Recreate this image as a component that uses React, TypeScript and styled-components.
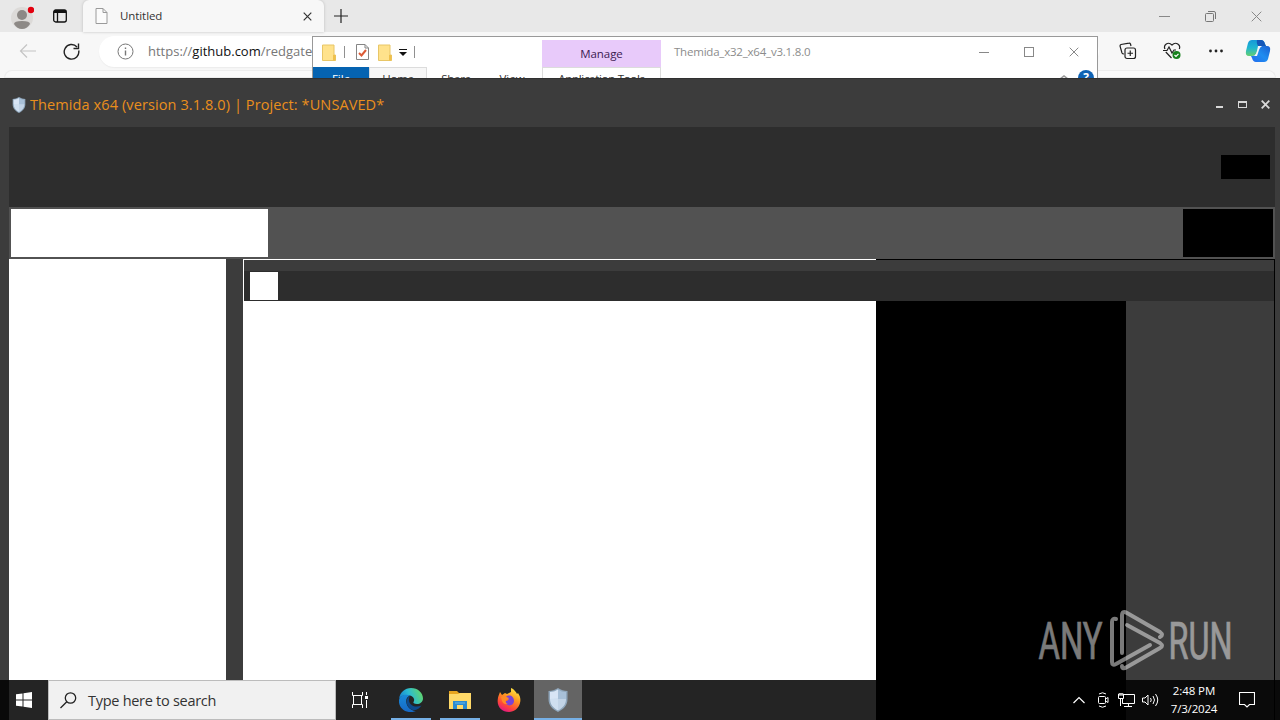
import React from "react";
import styled, { createGlobalStyle } from "styled-components";

const Global = createGlobalStyle`
  * { box-sizing: border-box; }
  body { margin: 0; overflow: hidden; background: #3b3b3b; font-family: "Open Sans", "Noto Sans", sans-serif; }
  svg { display: block; flex: none; }
`;

const Desktop = styled.div`
  position: relative;
  width: 1280px;
  height: 720px;
  overflow: hidden;
  display: flex;
  flex-direction: column;
`;

const Label = styled.span<{ $size: number; $color: string; $spacing?: number; $weight?: number }>`
  font-size: ${(p) => p.$size}px;
  line-height: 20px;
  color: ${(p) => p.$color};
  letter-spacing: ${(p) => p.$spacing ?? 0}px;
  font-weight: ${(p) => p.$weight ?? 400};
  white-space: pre;
`;

const Browser = styled.div`
  position: relative;
  height: 78px;
  flex: none;
  overflow: hidden;
  background: #f7f7f7;
`;

const TabStrip = styled.div`
  height: 32px;
  display: flex;
  align-items: center;
  background: #e8e8e8;
  padding-left: 10px;
`;

const BrowserTab = styled.div`
  width: 241px;
  height: 32px;
  margin-left: 14px;
  padding: 0 12px 0 12px;
  display: flex;
  align-items: center;
  background: #f7f7f7;
  border-radius: 6px 6px 0 0;
  box-shadow: 0 0 3px #bbb;
`;

const TabTitle = styled(Label)`
  flex: 1;
  margin-left: 12px;
`;

const CaptionButtons = styled.div<{ $gap: number; $right: number }>`
  margin-left: auto;
  padding-right: ${(p) => p.$right}px;
  display: flex;
  align-items: center;
  gap: ${(p) => p.$gap}px;
`;

const AddressRow = styled.div`
  height: 38px;
  display: flex;
  align-items: center;
  padding-left: 19px;
`;

const AddressBar = styled.div`
  width: 1000px;
  height: 31px;
  margin-left: 19px;
  padding-left: 18px;
  border-radius: 16px;
  background: #fff;
  box-shadow: 0 1px 1px #ececec;
  display: flex;
  align-items: center;
`;

const Url = styled.div`
  margin-left: 14px;
  display: flex;
`;

const BrowserTools = styled.div`
  margin-left: auto;
  padding-right: 9px;
  display: flex;
  align-items: center;
`;

const PageEdge = styled.div`
  height: 8px;
  margin: 0 4px;
  border-radius: 8px 8px 0 0;
  border: 1px solid #ececec;
  background: #f9f9f9;
`;

const Explorer = styled.div`
  position: absolute;
  left: 312px;
  top: 36px;
  width: 786px;
  height: 60px;
  border: 1px solid #999;
  background: #fff;
`;

const ExplorerTitle = styled.div`
  height: 30px;
  display: flex;
  align-items: center;
  padding-left: 9px;
`;

const Divider = styled.div<{ $left: number; $right?: number }>`
  width: 1px;
  height: 12px;
  margin: 0 ${(p) => p.$right ?? 0}px 0 ${(p) => p.$left}px;
  background: #909090;
`;

const Manage = styled.div`
  width: 119px;
  height: 27px;
  margin: 3px 0 0 127px;
  background: #e8cafa;
  display: flex;
  justify-content: center;
  align-items: center;
`;

const Ribbon = styled.div`
  height: 28px;
  display: flex;
`;

const RibbonTab = styled.div<{ $width: number; $bg?: string; $framed?: boolean; $gap?: number }>`
  width: ${(p) => p.$width}px;
  height: 28px;
  margin-left: ${(p) => p.$gap ?? 0}px;
  background: ${(p) => p.$bg ?? "#fff"};
  border: solid #dcdcdc;
  border-width: ${(p) => (p.$framed ? "1px 1px 0" : "0")};
  padding-top: ${(p) => (p.$framed ? 1 : 2)}px;
  display: flex;
  justify-content: center;
  align-items: flex-start;
`;

const Window = styled.div`
  height: 602px;
  flex: none;
  display: flex;
  flex-direction: column;
  background: #3c3c3c;
  border-top: 1px solid #303030;
  padding: 0 5px 0 9px;
`;

const WindowTitle = styled.div`
  height: 48px;
  display: flex;
  align-items: center;
  padding: 3px 0 0 2px;
`;

const HeaderPanel = styled.div`
  height: 80px;
  padding: 28px 5px 0 0;
  display: flex;
  justify-content: flex-end;
  background: #2d2d2d;
`;

const Block = styled.div<{ $w: number; $h: number; $color: string }>`
  width: ${(p) => p.$w}px;
  height: ${(p) => p.$h}px;
  background: ${(p) => p.$color};
`;

const Toolbar = styled.div`
  height: 52px;
  padding: 2px 2px;
  display: flex;
  justify-content: space-between;
  background: #525252;
`;

const Body = styled.div`
  flex: 1;
  display: flex;
  justify-content: space-between;
`;

const SidePane = styled.div`
  width: 217px;
  background: #fff;
`;

const MainPane = styled.div`
  width: 1032px;
  display: flex;
  flex-direction: column;
  border-right: 1px solid #000;
`;

const TopLine = styled.div`
  height: 1px;
  flex: none;
  background: #000;
  border-left: 633px solid #fff;
`;

const PaneStrip = styled.div`
  height: 11px;
  border-left: 1px solid #fff;
`;

const PaneTabs = styled.div`
  height: 30px;
  padding: 1px 0 0 6px;
  border-left: 1px solid #fff;
  background: #2d2d2d;
`;

const Content = styled.div`
  flex: 1;
  display: flex;
`;

const Fill = styled.div<{ $w: number; $color: string }>`
  width: ${(p) => p.$w}px;
  background: ${(p) => p.$color};
`;

const Taskbar = styled.div`
  height: 40px;
  flex: none;
  display: flex;
  background: linear-gradient(90deg, #090909 9px, #242424 9px, #242424 876px, #000 876px, #000 1126px, #0a0a0a 1126px, #0a0a0a 1274px, #000 1274px, #000 1275px, #0a0a0a 1275px);
`;

const TaskButton = styled.div<{ $w: number; $bar?: number; $active?: boolean }>`
  position: relative;
  width: ${(p) => p.$w}px;
  height: 40px;
  display: flex;
  align-items: center;
  justify-content: center;
  background: ${(p) => (p.$active ? "#646464" : "transparent")};
  &::after {
    content: "";
    position: absolute;
    bottom: 0;
    width: ${(p) => p.$bar ?? 0}px;
    height: 2px;
    background: #76b0e6;
  }
`;

const Search = styled.div`
  width: 288px;
  height: 40px;
  display: flex;
  align-items: center;
  gap: 11px;
  padding: 1px 0 0 11px;
  border: 1px solid #bcbcbc;
  background: #f1f1f1;
`;

const Tray = styled.div`
  margin-left: auto;
  padding-right: 25px;
  display: flex;
  align-items: center;
`;

const Clock = styled.div`
  width: 60px;
  margin: 0 15px 0 5px;
  display: flex;
  flex-direction: column;
  align-items: center;
  span { line-height: 18px; }
`;

const Watermark = styled.svg`
  position: absolute;
  left: 1030px;
  top: 604px;
`;

const Gap = styled.div<{ $w: number }>`
  width: ${(p) => p.$w}px;
  flex: none;
`;

const Shield = ({ w, h }: { w: number; h: number }) => (
  <svg width={w} height={h} viewBox="0 0 20 24">
    <path d="M10 0C7 2 4 3 0.5 3V11C0.5 17 4 21 10 24C16 21 19.500 17 19.500 11V3C16 3 13 2 10 0Z" fill="#8fa6bb" />
    <path d="M10 1.500C7.500 3.200 5 4 2 4V11C2 16 5 20 10 22.500Z" fill="#cfdff0" />
    <path d="M10 1.500C12.500 3.200 15 4 18 4V11C18 16 15 20 10 22.500Z" fill="#a8c0d8" />
    <path d="M10 1.500C7.500 3.200 5 4 2 4V11L10 10ZM10 11V22.500C15 20 18 16 18 11Z" fill="#e3eefa" opacity=".45" />
  </svg>
);

const Folder = () => (
  <svg width="14" height="17" viewBox="0 0 14 17">
    <path d="M.5 1H12V11H13.500V16.500H.5Z" fill="#ffe28c" stroke="#e8c667" />
    <path d="M11 11V16.500H13.500V11Z" fill="#efc04c" />
  </svg>
);

const Cross = ({ size, color, width = 1 }: { size: number; color: string; width?: number }) => (
  <svg width={size} height={size} viewBox={`0 0 ${size} ${size}`} stroke={color} strokeWidth={width}>
    <path d={`M.7 .7L${size - 0.7} ${size - 0.7}M${size - 0.7} .7L.7 ${size - 0.7}`} />
  </svg>
);

export default function App() {
  return (
    <Desktop>
      <Global />
      <Browser>
        <TabStrip>
          <svg width="24" height="28" viewBox="0 0 24 28">
            <circle cx="12" cy="16" r="11" fill="#dcdad8" />
            <circle cx="12" cy="13" r="5" fill="#8d8986" />
            <path d="M4 22Q4 19 12 19T20 22Q17 27 12 27T4 22Z" fill="#8d8986" />
            <circle cx="21" cy="8" r="3.200" fill="#e3000f" />
          </svg>
          <Gap $w={19} />
          <svg width="16" height="16" viewBox="0 0 16 16" fill="none" stroke="#111">
            <rect x=".7" y="2" width="12.600" height="12" rx="2" strokeWidth="1.300" />
            <path d="M1 3.500H13" strokeWidth="3" />
            <path d="M4.500 4V14" strokeWidth="1.300" />
          </svg>
          <BrowserTab>
            <svg width="13" height="16" viewBox="0 0 13 16" fill="#fbfbfb" stroke="#9a9a9a">
              <path d="M1 .5H8L12 4.500V15.500H1ZM8 .5V4.500H12" />
            </svg>
            <TabTitle $size={11.5} $color="#333" $spacing={-0.08}>Untitled</TabTitle>
            <Cross size={9} color="#333" width={1.2} />
          </BrowserTab>
          <Gap $w={10} />
          <svg width="14" height="14" viewBox="0 0 14 14" stroke="#222" strokeWidth="1.200">
            <path d="M7 0V14M0 7H14" />
          </svg>
          <CaptionButtons $gap={35} $right={18}>
            <svg width="11" height="11" stroke="#888"><path d="M0 5.500H11" /></svg>
            <svg width="11" height="11" viewBox="0 0 11 11" fill="none" stroke="#777">
              <rect x=".5" y="2.500" width="8" height="8" rx="1" />
              <path d="M3 .5H9Q10.500 .5 10.500 2V8" />
            </svg>
            <Cross size={11} color="#888" />
          </CaptionButtons>
        </TabStrip>
        <AddressRow>
          <svg width="18" height="14" viewBox="0 0 18 14" fill="none" stroke="#c4c4c4" strokeWidth="1.200">
            <path d="M8 .5L1.500 7L8 13.500M1.500 7H17" />
          </svg>
          <Gap $w={26} />
          <svg width="17" height="17" viewBox="0 0 17 17" fill="none" stroke="#222" strokeWidth="1.400">
            <path d="M15.700 7.500A7.300 7.300 0 1 1 14 4M15.500 .5V5.500H10.500" />
          </svg>
          <AddressBar>
            <svg width="17" height="17" viewBox="0 0 17 17" fill="none" stroke="#777">
              <circle cx="8.500" cy="8.500" r="7.500" />
              <path d="M8.500 7.500V12.500M8.500 4.500V6" strokeWidth="1.400" />
            </svg>
            <Url>
              <Label $size={13} $color="#777">https://</Label>
              <Label $size={13} $color="#111">github.com</Label>
              <Label $size={13} $color="#777">/redgate</Label>
            </Url>
          </AddressBar>
          <BrowserTools>
            <svg width="18" height="18" viewBox="0 0 18 18" fill="none" stroke="#222" strokeWidth="1.200">
              <rect x="6" y="6" width="10.500" height="10.500" rx="2" />
              <path d="M11.250 8.500V14M8.500 11.250H14M12 4L11.500 2Q11 1 10 1.200L2 2.500Q1 3 1 4L3 11Q3.500 12 5 12" />
            </svg>
            <Gap $w={26} />
            <svg width="19" height="18" viewBox="0 0 19 18" fill="none" stroke="#222" strokeWidth="1.200">
              <path d="M2 7C0 3 5-1 9 3C13-1 18 3 16.300 7M2.800 10L8.500 16M0 8.500H4L6 5L9 11L11 8H13" />
              <circle cx="13.500" cy="13" r="4" fill="#16811c" stroke="none" />
              <path d="M11.500 13L13 14.500L15.500 11.800" stroke="#fff" />
            </svg>
            <Gap $w={26} />
            <svg width="16" height="4" viewBox="0 0 16 4" fill="#222">
              <circle cx="2.500" cy="2" r="1.400" /><circle cx="8" cy="2" r="1.400" /><circle cx="13.500" cy="2" r="1.400" />
            </svg>
            <Gap $w={21} />
            <svg width="26" height="24" viewBox="0 0 26 24">
              <defs>
                <linearGradient id="copilotA" x1="0" y1="0" x2="0" y2="1"><stop stopColor="#1699d8" /><stop offset=".5" stopColor="#20b6d0" /><stop offset="1" stopColor="#64cf70" /></linearGradient>
                <linearGradient id="copilotB" x1="1" y1="0" x2="0" y2="1"><stop stopColor="#1b5fd0" /><stop offset=".5" stopColor="#1f8df0" /><stop offset="1" stopColor="#226bee" /></linearGradient>
              </defs>
              <path d="M7 1H16Q19 1 20 5L21 7H17Q14 7 13 10L11 15Q10 17 7 17H4Q0 17 1 12L3 4Q4 1 7 1Z" fill="url(#copilotA)" />
              <path d="M12 1H16Q19 1 20 5L21 7H17Q15 7 14 8Q11 5 12 1Z" fill="#1557b8" />
              <path d="M19 23H11Q8 23 7 19L6 17Q10 17 11 15L13 10Q14 7 17 7H22Q26 7 25 12L23 20Q22 23 19 23Z" fill="url(#copilotB)" />
              <path d="M13 7H17Q15 8 14 11L12 17H9Q11 16 12 12Z" fill="#f7f7f7" />
            </svg>
          </BrowserTools>
        </AddressRow>
        <PageEdge />
        <Explorer>
          <ExplorerTitle>
            <Folder />
            <Divider $left={8} $right={11} />
            <svg width="13" height="16" viewBox="0 0 13 16" fill="#fff" stroke="#858585">
              <path d="M.5 .5H9L12.500 4V15.500H.5ZM9 .5V4H12.500" />
              <path d="M3 9L5.500 11.500L10 6" fill="none" stroke="#dc5b36" strokeWidth="2" />
            </svg>
            <Gap $w={9} />
            <Folder />
            <Gap $w={7} />
            <svg width="8" height="8" viewBox="0 0 8 8" fill="#111"><path d="M0 1H8V2H0ZM0 4H8L4 8Z" /></svg>
            <Divider $left={7} />
            <Manage><Label $size={11.5} $color="#3c2052" $spacing={-0.05}>Manage</Label></Manage>
            <Gap $w={13} />
            <Label $size={11.5} $color="#8c8c8c" $spacing={-0.21}>Themida_x32_x64_v3.1.8.0</Label>
            <CaptionButtons $gap={35} $right={18}>
              <svg width="10" height="10" stroke="#888"><path d="M0 5.500H10" /></svg>
              <svg width="10" height="10" fill="none" stroke="#888"><rect x=".5" y=".5" width="9" height="9" /></svg>
              <Cross size={10} color="#888" />
            </CaptionButtons>
          </ExplorerTitle>
          <Ribbon>
            <RibbonTab $width={56} $bg="#0563b1"><Label $size={11.5} $color="#fff">File</Label></RibbonTab>
            <RibbonTab $width={58} $bg="#f7f7f7" $framed><Label $size={11.5} $color="#333" $spacing={-0.3}>Home</Label></RibbonTab>
            <RibbonTab $width={58}><Label $size={11.5} $color="#333" $spacing={-0.3}>Share</Label></RibbonTab>
            <RibbonTab $width={54}><Label $size={11.5} $color="#333">View</Label></RibbonTab>
            <RibbonTab $width={119} $gap={3} $framed><Label $size={11.5} $color="#333" $spacing={-0.3}>Application Tools</Label></RibbonTab>
            <Gap $w={398} />
            <svg width="36" height="20" viewBox="0 0 36 20">
              <path d="M1 12L5 9L9 12" fill="none" stroke="#999" strokeWidth="1.500" />
              <circle cx="27" cy="11" r="8" fill="#0e62b4" />
              <text x="27" y="15" textAnchor="middle" fontSize="12" fontWeight="700" fill="#fff">?</text>
            </svg>
          </Ribbon>
        </Explorer>
      </Browser>

      <Window>
        <WindowTitle>
          <Shield w={16} h={16} />
          <Gap $w={3} />
          <Label $size={14.5} $color="#ea8f1c" $spacing={0.1}>{"Themida x64 (version 3.1.8.0) | Project: *UNSAVED*"}</Label>
          <CaptionButtons $gap={14} $right={5}>
            <svg width="9" height="9" stroke="#d8d8d8" strokeWidth="2"><path d="M1 7H8" /></svg>
            <svg width="9" height="8" fill="none" stroke="#d8d8d8"><rect x=".5" y=".5" width="8" height="6" /><path d="M0 1H9" strokeWidth="2" /></svg>
            <Cross size={9} color="#d8d8d8" width={1.8} />
          </CaptionButtons>
        </WindowTitle>
        <HeaderPanel><Block $w={49} $h={24} $color="#000" /></HeaderPanel>
        <Toolbar>
          <Block $w={257} $h={48} $color="#fff" />
          <Block $w={90} $h={48} $color="#000" />
        </Toolbar>
        <Body>
          <SidePane />
          <MainPane>
            <TopLine />
            <PaneStrip />
            <PaneTabs><Block $w={28} $h={28} $color="#fff" /></PaneTabs>
            <Content>
              <Fill $w={633} $color="#fff" />
              <Fill $w={250} $color="#000" />
            </Content>
          </MainPane>
        </Body>
      </Window>

      <Taskbar>
        <TaskButton $w={48}>
          <svg width="16" height="16" viewBox="0 0 16 16" fill="#fff">
            <path d="M0 2.300L6.500 1.400V7.500H0ZM7.500 1.200L16 0V7.500H7.500ZM0 8.500H6.500V14.600L0 13.700ZM7.500 8.500H16V16L7.500 14.800Z" />
          </svg>
        </TaskButton>
        <Search>
          <svg width="17" height="17" viewBox="0 0 17 17" fill="none" stroke="#222" strokeWidth="1.300">
            <circle cx="10.500" cy="6" r="5.200" /><path d="M6.800 9.700L.5 16" />
          </svg>
          <Label $size={14.5} $color="#333" $spacing={-0.28}>Type here to search</Label>
        </Search>
        <TaskButton $w={48}>
          <svg width="16" height="16" viewBox="0 0 16 16" fill="none" stroke="#fff">
            <path d="M.5 0V3.500H10.500V0M.5 16V12.500H10.500V16M1.500 3.500V12.500M9.500 3.500V12.500M14.500 0V3M14.500 8V16" />
            <path d="M13 5.500H16" strokeWidth="3" />
          </svg>
        </TaskButton>
        <Gap $w={3} />
        <TaskButton $w={48} $bar={40}>
          <svg width="24" height="24" viewBox="0 0 24 24">
            <defs>
              <linearGradient id="edgeTop" x1="0" y1=".6" x2="1" y2=".3"><stop stopColor="#1680cf" /><stop offset=".45" stopColor="#2abbd3" /><stop offset="1" stopColor="#65d866" /></linearGradient>
              <linearGradient id="edgeLow" x1="0" y1="0" x2="0" y2="1"><stop stopColor="#1889d8" /><stop offset="1" stopColor="#1768c4" /></linearGradient>
            </defs>
            <path d="M0 11C1 4 6 0 12 0C19 0 24 5 24 10.500C24 14 21 16 18 16C15 16 14 14.800 14.500 14C16 12 15 8.500 11 7.500C6 6.500 1 8 0 11Z" fill="url(#edgeTop)" />
            <path d="M0 12C1 7 7 6 11 7.500C7 9 6.500 13 8 17C10 21 14 23 17 23C8 27-1 20 0 12Z" fill="url(#edgeLow)" />
            <path d="M11 8C6 11 7 17 11 20.500C15 24 20 21.500 22.500 17.500C17 20 11 18 10 13C9.700 11 10 9.500 11 8Z" fill="#0d4a8c" />
          </svg>
        </TaskButton>
        <Gap $w={1} />
        <TaskButton $w={48} $bar={40}>
          <svg width="22" height="18" viewBox="0 0 22 18">
            <path d="M0 0H8L10 2H22V7H0Z" fill="#e8a51e" />
            <path d="M0 3H9L11 2H22V18H0Z" fill="#ffd968" />
            <path d="M4 10H18V18H14V14H8V18H4Z" fill="#2b8bd1" />
            <path d="M6 12H16" stroke="#68b7e8" />
          </svg>
        </TaskButton>
        <Gap $w={1} />
        <TaskButton $w={48}>
          <svg width="24" height="24" viewBox="0 0 24 24">
            <defs><linearGradient id="fox" x1=".8" y1="0" x2=".3" y2="1"><stop stopColor="#fff04a" /><stop offset=".4" stopColor="#ff9a1f" /><stop offset=".75" stopColor="#ff4638" /><stop offset="1" stopColor="#e31587" /></linearGradient></defs>
            <path d="M3 4L5 7L8 5L10 6L14 4L14 0C17 1 19 4 20 6L21 5C23 8 24 11 23 15C22 20 17 24 12 24C5 24 0 19 .7 12C1 8 2 7 3 4Z" fill="url(#fox)" />
            <path d="M9 9C12 6 17 8 17 13C17 17 12 19 9 16C7 14 8 13 10 13L12 11Z" fill="#7a43d6" />
            <path d="M4 9Q7 7 9 9L12 10L9 12Q8 15 11 16Q7 17 5 13Z" fill="#ff8a26" />
          </svg>
        </TaskButton>
        <Gap $w={1} />
        <TaskButton $w={48} $bar={48} $active><Shield w={20} h={24} /></TaskButton>
        <Tray>
          <svg width="12" height="8" viewBox="0 0 12 8" fill="none" stroke="#fff" strokeWidth="1.200"><path d="M.5 7L6 1.500L11.500 7" /></svg>
          <Gap $w={12} />
          <svg width="12" height="16" viewBox="0 0 12 16" fill="none" stroke="#fff">
            <rect x="1.500" y="4.500" width="7" height="7" rx="1" /><path d="M8.500 7L11 5.500V10.500L8.500 9M2 2Q5.500-.5 9 2M2 14Q5.500 16.500 9 14" />
          </svg>
          <Gap $w={9} />
          <svg width="17" height="14" viewBox="0 0 17 14" fill="none" stroke="#fff">
            <path d="M6 1.500H16.500V10.500H4.500V6M10.500 10.500V13M6 13.500H14M.5 1H5.500V5.500H.5ZM2.500 5.500V13M2 0V3M4 0V3" />
          </svg>
          <Gap $w={7} />
          <svg width="17" height="14" viewBox="0 0 17 14" fill="none" stroke="#fff">
            <path d="M.5 5H3L6 2V12L3 9H.5ZM8.500 5Q10 7 8.500 9M11 3Q14 7 11 11M13.500 1Q18 7 13.500 13" />
          </svg>
          <Clock>
            <Label $size={11.5} $color="#fff" $spacing={-0.1}>2:48 PM</Label>
            <Label $size={11.5} $color="#fff" $spacing={-0.2}>7/3/2024</Label>
          </Clock>
          <svg width="16" height="16" viewBox="0 0 16 16" fill="none" stroke="#fff" strokeWidth="1.100">
            <path d="M.5 .5H15.500V12.500H10.500L8 15L5.500 12.500H.5Z" />
          </svg>
        </Tray>
      </Taskbar>

      <Watermark width="210" height="76" viewBox="0 0 210 76">
        <g fill="#fff" stroke="#fff" strokeWidth=".7" opacity=".48" fontFamily="Roboto, sans-serif" fontSize="51.500">
          <text x="8.500" y="55" textLength="64" lengthAdjust="spacingAndGlyphs">ANY</text>
          <text x="138.500" y="55" textLength="64" lengthAdjust="spacingAndGlyphs">RUN</text>
        </g>
        <path
          d="M86 15Q82 14 82 18V58Q82 62 86 60L120 41M92 49V12Q92 6 97 9L130 28Q134 31 130 33M97 21L130 39Q134 42 130 44L97 63Q92 66 92 62"
          fill="none" stroke="#fff" strokeWidth="4" strokeLinecap="round" strokeLinejoin="round" opacity=".48"
        />
      </Watermark>
    </Desktop>
  );
}
